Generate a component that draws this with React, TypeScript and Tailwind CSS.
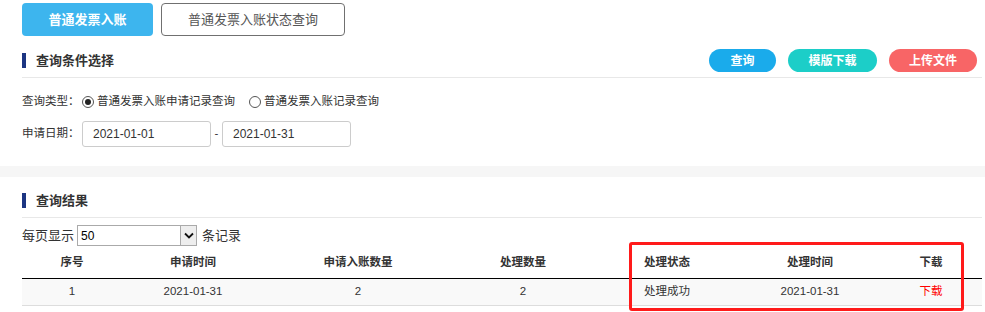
const font = { fontFamily: '"Liberation Sans", "Noto Sans CJK SC", sans-serif' };

const cols = [
  { title: '序号', w: 'w-[100px]', val: '1' },
  { title: '申请时间', w: 'w-[142px]', val: '2021-01-31' },
  { title: '申请入账数量', w: 'w-[188px]', val: '2' },
  { title: '处理数量', w: 'w-[142px]', val: '2' },
  { title: '处理状态', w: 'w-[146px]', val: '处理成功' },
  { title: '处理时间', w: 'w-[140px]', val: '2021-01-31' },
  { title: '下载', w: 'w-[102px]', val: '下载' },
];

function SectionTitle({ text, children }: { text: string; children?: React.ReactNode }) {
  return (
    <div className="flex items-center h-[34px] border-b border-[#e8e8e8]">
      <div className="w-[4px] h-[15px] bg-[#1c3582]" />
      <span className="ml-[10px] text-[13px] font-bold text-[#333]">{text}</span>
      <div className="ml-auto flex gap-[12px] mr-[5px]">{children}</div>
    </div>
  );
}

function Radio({ checked, label }: { checked?: boolean; label: string }) {
  return (
    <label className="flex items-center">
      <span className="w-[12px] h-[12px] rounded-full border border-[#555] flex items-center justify-center">
        {checked && <span className="w-[6px] h-[6px] rounded-full bg-[#222]" />}
      </span>
      <span className="ml-[3px]">{label}</span>
    </label>
  );
}

export default function App() {
  return (
    <div className="relative w-[985px] h-[312px] bg-white overflow-hidden text-[#333]" style={font}>
      {/* tabs */}
      <div className="flex gap-[8px] pl-[22px] pt-[3px]">
        <button className="w-[131px] h-[33px] rounded-[4px] bg-[#3db5ee] text-white text-[13px] font-bold">
          普通发票入账
        </button>
        <button className="w-[184px] h-[33px] rounded-[4px] border border-[#707070] bg-white text-[#555] text-[13px]">
          普通发票入账状态查询
        </button>
      </div>

      <div className="pl-[22px] pr-[3px] mt-[8px]">
        <SectionTitle text="查询条件选择">
          <button className="w-[67px] h-[23px] rounded-full bg-[#1aabeb] text-white text-[12px] font-bold">查询</button>
          <button className="w-[89px] h-[23px] rounded-full bg-[#1ccec8] text-white text-[12px] font-bold">模版下载</button>
          <button className="w-[88px] h-[23px] rounded-full bg-[#f86566] text-white text-[12px] font-bold">上传文件</button>
        </SectionTitle>

        <div className="flex items-center mt-[16px] text-[11.5px] h-[16px]">
          <span className="w-[60px]">查询类型：</span>
          <Radio checked label="普通发票入账申请记录查询" />
          <div className="ml-[14px]">
            <Radio label="普通发票入账记录查询" />
          </div>
        </div>

        <div className="flex items-center mt-[11px] text-[11.5px]">
          <span className="w-[60px]">申请日期：</span>
          <div className="w-[129px] h-[26px] border border-[#ccc] rounded-[3px] flex items-center pl-[10px] text-[12px]">2021-01-01</div>
          <span className="w-[11px] text-center">-</span>
          <div className="w-[129px] h-[26px] border border-[#ccc] rounded-[3px] flex items-center pl-[10px] text-[12px]">2021-01-31</div>
        </div>
      </div>

      <div className="h-[11px] bg-[#f6f6f6] mt-[19px]" />

      <div className="pl-[22px] pr-[3px] mt-[7px]">
        <SectionTitle text="查询结果" />

        <div className="flex items-center mt-[7px] text-[13px]">
          <span>每页显示</span>
          <div className="ml-[3px] w-[120px] h-[21px] border border-[#aaa] flex items-center">
            <span className="flex-1 pl-[3px] text-[12px] text-black">50</span>
            <span className="w-[16px] h-full border-l border-[#aaa] bg-[#eee] flex items-center justify-center">
              <svg width="10" height="7" viewBox="0 0 10 7">
                <path d="M1 1.5 L5 5.5 L9 1.5" fill="none" stroke="#111" strokeWidth="1.8" />
              </svg>
            </span>
          </div>
          <span className="ml-[5px]">条记录</span>
        </div>

        <div className="flex h-[31px] mt-[2px] border-b border-black text-[11.5px] font-bold">
          {cols.map((c) => (
            <div key={c.title} className={`${c.w} flex items-center justify-center`}>{c.title}</div>
          ))}
        </div>
        <div className="flex h-[27px] bg-[#f9f9f9] border-b border-[#ddd] text-[11.5px]">
          {cols.map((c, i) => (
            <div key={c.title} className={`${c.w} flex items-center justify-center ${i === 6 ? 'text-[#f00]' : ''}`}>
              {c.val}
            </div>
          ))}
        </div>
      </div>

      {/* annotation box */}
      <div className="absolute left-[629px] top-[242px] w-[335px] h-[69px] border-[3px] border-[#ff1a1a] rounded-[3px]" />
    </div>
  );
}
